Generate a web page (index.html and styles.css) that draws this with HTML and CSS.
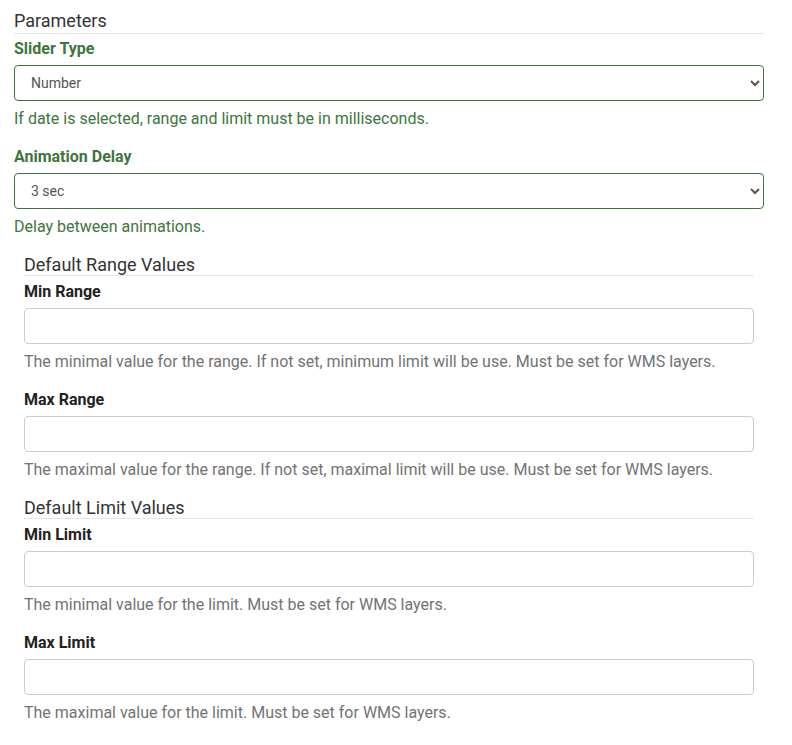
FILE: index.html
```html
<!DOCTYPE html>
<html>
<head>
<meta charset="utf-8">
<link rel="stylesheet" href="styles.css">
</head>
<body>
<div class="panel">
  <div class="legend">Parameters</div>
  <div class="group success">
    <label class="lbl">Slider Type</label>
    <select class="ctl ctl-success"><option>Number</option></select>
    <div class="help">If date is selected, range and limit must be in milliseconds.</div>
  </div>
  <div class="group success">
    <label class="lbl">Animation Delay</label>
    <select class="ctl ctl-success"><option>3 sec</option></select>
    <div class="help">Delay between animations.</div>
  </div>
  <div class="sub">
    <div class="legend legend-sub">Default Range Values</div>
    <div class="group">
      <label class="lbl">Min Range</label>
      <input class="ctl" type="text">
      <div class="help">The minimal value for the range. If not set, minimum limit will be use. Must be set for WMS layers.</div>
    </div>
    <div class="group">
      <label class="lbl">Max Range</label>
      <input class="ctl" type="text">
      <div class="help">The maximal value for the range. If not set, maximal limit will be use. Must be set for WMS layers.</div>
    </div>
    <div class="legend legend-sub">Default Limit Values</div>
    <div class="group">
      <label class="lbl">Min Limit</label>
      <input class="ctl" type="text">
      <div class="help">The minimal value for the limit. Must be set for WMS layers.</div>
    </div>
    <div class="group">
      <label class="lbl">Max Limit</label>
      <input class="ctl" type="text">
      <div class="help">The maximal value for the limit. Must be set for WMS layers.</div>
    </div>
  </div>
</div>
</body>
</html>
```
FILE: styles.css
```css
html, body {
  margin: 0;
  padding: 0;
  background: #fff;
}
body {
  font-family: Roboto, "Liberation Sans", Arial, sans-serif;
  font-size: 16px;
  color: #333;
}
.panel {
  width: 750px;
  padding: 10px 0 0 14px;
}
.legend {
  font-size: 18px;
  line-height: 21px;
  padding-bottom: 2px;
  color: #333;
  border-bottom: 1px solid #e5e5e5;
  margin-bottom: 4px;
}
.legend-sub {
  padding-bottom: 0;
  margin-bottom: 5px;
}
.group {
  display: flex;
  flex-direction: column;
  margin-bottom: 16px;
}
.lbl {
  font-weight: bold;
  line-height: 22px;
  margin-bottom: 5px;
  color: #222;
}
.ctl {
  box-sizing: border-box;
  width: 100%;
  height: 36px;
  margin: 0;
  padding: 6px 12px;
  font-family: Roboto, "Liberation Sans", Arial, sans-serif;
  font-size: 14px;
  color: #555;
  background: #fff;
  border: 1px solid #ccc;
  border-radius: 4px;
}
.ctl-success {
  border-color: #3c763d;
}
.help {
  margin-top: 7px;
  line-height: 22px;
  color: #737373;
}
.success .lbl,
.success .help {
  color: #3c763d;
}
.sub {
  padding: 0 10px;
}
```
